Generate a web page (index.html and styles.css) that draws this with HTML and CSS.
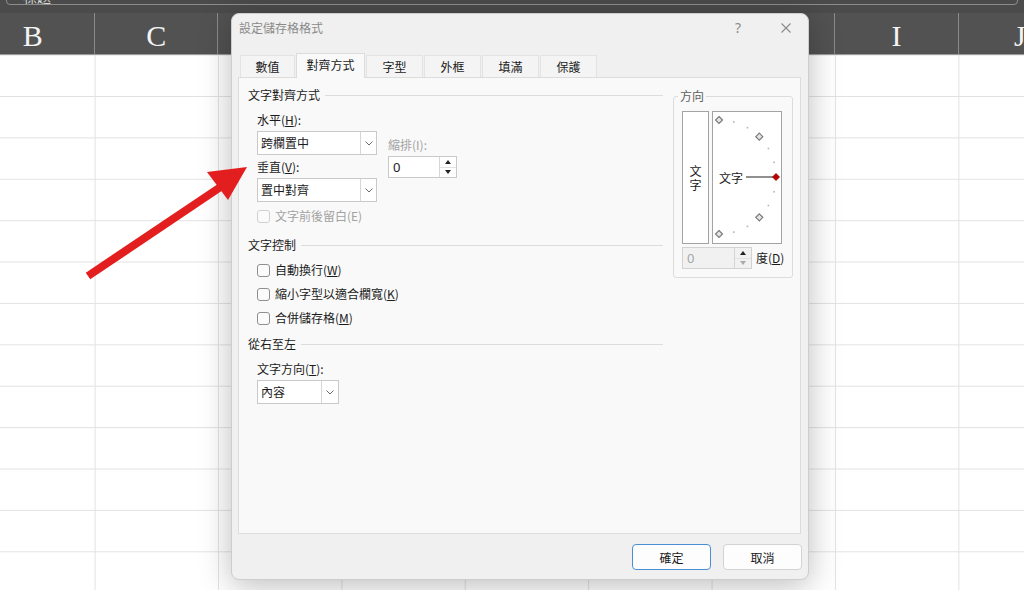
FILE: index.html
```html
<!DOCTYPE html>
<html lang="zh-Hant">
<head>
<meta charset="utf-8">
<title>設定儲存格格式</title>
<link rel="stylesheet" href="styles.css">
</head>
<body>
<div class="sheet">
  <div class="topbar"><div class="namebox">標題</div></div>
  <div class="colheader">
    <div class="col">B</div><div class="col">C</div><div class="col">D</div><div class="col">E</div><div class="col">F</div><div class="col">G</div><div class="col">H</div><div class="col">I</div><div class="col">J</div>
  </div>
  <div class="grid"></div>
</div>

<div class="dialog">
  <div class="titlebar">
    <span class="title">設定儲存格格式</span>
    <span class="help">?</span>
    <span class="close"><svg viewBox="0 0 10 10" width="10" height="10"><path d="M0.5 0.5L9.5 9.5M9.5 0.5L0.5 9.5" stroke="#8a8a8a" stroke-width="1.1" fill="none"/></svg></span>
  </div>
  <div class="tabs">
    <div class="tab first">數值</div>
    <div class="tab active">對齊方式</div>
    <div class="tab">字型</div>
    <div class="tab">外框</div>
    <div class="tab">填滿</div>
    <div class="tab">保護</div>
  </div>
  <div class="panel">
    <div class="leftcol">
      <div class="grouphead"><span>文字對齊方式</span><i class="rule"></i></div>
      <div class="indent">
        <div class="alignrow">
          <div class="subcol">
            <div class="label">水平(<u>H</u>):</div>
            <div class="select"><span class="val">跨欄置中</span><span class="drop"><svg viewBox="0 0 8 5" width="8" height="5"><path d="M0.5 0.5L4 4L7.5 0.5" stroke="#6a6a6a" fill="none" stroke-width="1"/></svg></span></div>
            <div class="label second">垂直(<u>V</u>):</div>
            <div class="select"><span class="val">置中對齊</span><span class="drop"><svg viewBox="0 0 8 5" width="8" height="5"><path d="M0.5 0.5L4 4L7.5 0.5" stroke="#6a6a6a" fill="none" stroke-width="1"/></svg></span></div>
          </div>
          <div class="indentcol">
            <div class="label dim">縮排(I):</div>
            <div class="spin"><span class="spinval">0</span><span class="spinbtns"><span class="up"></span><span class="down"></span></span></div>
          </div>
        </div>
        <div class="check disabled first-check"><span class="box"></span><span>文字前後留白(E)</span></div>
      </div>

      <div class="grouphead g2"><span>文字控制</span><i class="rule"></i></div>
      <div class="indent checks">
        <div class="check"><span class="box"></span><span>自動換行(<u>W</u>)</span></div>
        <div class="check"><span class="box"></span><span>縮小字型以適合欄寬(<u>K</u>)</span></div>
        <div class="check"><span class="box"></span><span>合併儲存格(<u>M</u>)</span></div>
      </div>

      <div class="grouphead g3"><span>從右至左</span><i class="rule"></i></div>
      <div class="indent">
        <div class="label third">文字方向(<u>T</u>):</div>
        <div class="select small"><span class="val">內容</span><span class="drop"><svg viewBox="0 0 8 5" width="8" height="5"><path d="M0.5 0.5L4 4L7.5 0.5" stroke="#6a6a6a" fill="none" stroke-width="1"/></svg></span></div>
      </div>
    </div>

    <fieldset class="orient">
      <legend>方向</legend>
      <div class="orientrow">
        <div class="vbox"><span>文</span><span>字</span></div>
        <div class="sbox">
          <svg viewBox="0 0 68 131" width="68" height="131">
            <g fill="#b4b4b4">
              <rect x="20" y="9.2" width="1.6" height="1.6"/>
              <rect x="33.7" y="14.9" width="1.6" height="1.6"/>
              <rect x="54.6" y="35.7" width="1.6" height="1.6"/>
              <rect x="60.3" y="49.5" width="1.6" height="1.6"/>
              <rect x="60.3" y="79" width="1.6" height="1.6"/>
              <rect x="54.6" y="92.7" width="1.6" height="1.6"/>
              <rect x="33.7" y="113.6" width="1.6" height="1.6"/>
              <rect x="20" y="119.3" width="1.6" height="1.6"/>
            </g>
            <g fill="#e6e6e6" stroke="#7a7a7a" stroke-width="1.2">
              <polygon points="6,4.5 9.5,8 6,11.5 2.5,8"/>
              <polygon points="46.3,21.2 49.8,24.7 46.3,28.2 42.8,24.7"/>
              <polygon points="46.3,101.8 49.8,105.3 46.3,108.8 42.8,105.3"/>
              <polygon points="6,118.5 9.5,122 6,125.5 2.5,122"/>
            </g>
            <text x="6" y="71" class="svgtext">文字</text>
            <line x1="33" y1="65" x2="60" y2="65" stroke="#222" stroke-width="1"/>
            <polygon points="63,61.5 66.5,65 63,68.5 59.5,65" fill="#c00000" stroke="#8a0000" stroke-width="0.8"/>
          </svg>
        </div>
      </div>
      <div class="degrow">
        <div class="spin disabled"><span class="spinval">0</span><span class="spinbtns"><span class="up"></span><span class="down"></span></span></div>
        <span class="deg">度(<u>D</u>)</span>
      </div>
    </fieldset>
  </div>
  <div class="footer">
    <button class="btn primary">確定</button>
    <button class="btn">取消</button>
  </div>
</div>

<svg class="arrow" viewBox="0 0 1024 590" width="1024" height="590">
  <line x1="88" y1="276" x2="222" y2="186" stroke="#e31e1e" stroke-width="8"/>
  <polygon points="247,167 207,172 228,200" fill="#e31e1e"/>
</svg>
</body>
</html>
```

FILE: styles.css
```css
* { box-sizing: border-box; }

body {
  margin: 0;
  width: 1024px;
  height: 590px;
  overflow: hidden;
  position: relative;
  background: #ffffff;
  font-family: "Noto Sans CJK TC", "Noto Sans", sans-serif;
  font-size: 12px;
  color: #1b1b1b;
}

u { text-decoration: underline; text-underline-offset: 1px; }

/* ---------- spreadsheet background ---------- */
.sheet {
  display: flex;
  flex-direction: column;
  height: 590px;
  overflow: hidden;
}

.topbar {
  height: 13px;
  background: #4b4b4b;
  overflow: hidden;
  padding: 0 6px;
}

.namebox {
  margin-top: -13px;
  height: 18px;
  border: 1px solid #8d8d8d;
  border-radius: 4px;
  color: #d8d8d8;
  font-size: 14px;
  line-height: 16px;
  padding-left: 16px;
}

.colheader {
  height: 42px;
  background: #525252;
  border-bottom: 1px solid #9a9a9a;
  display: flex;
  margin-left: -28.4px;
  overflow: hidden;
}

.col {
  flex: 0 0 123.4px;
  border-right: 1px solid #8a8a8a;
  color: #f4f4f4;
  font-family: "Liberation Serif", serif;
  font-size: 30px;
  display: flex;
  justify-content: center;
  align-items: center;
  padding-top: 4px;
}

.grid {
  flex: 1;
  background-color: #ffffff;
  background-image:
    linear-gradient(to right, #e2e2e2 1px, transparent 1px),
    linear-gradient(to bottom, #e2e2e2 1px, transparent 1px);
  background-size: 123.4px 100%, 100% 41.4px;
  background-position: 94.6px 0, 0 41px;
}

/* ---------- dialog ---------- */
.dialog {
  position: absolute;
  left: 231px;
  top: 13px;
  width: 578px;
  height: 567px;
  background: #f0f0f0;
  border: 1px solid #cdcdcd;
  border-radius: 8px;
  box-shadow: 0 6px 32px rgba(0, 0, 0, 0.26);
  display: flex;
  flex-direction: column;
  z-index: 5;
}

.titlebar {
  height: 28px;
  display: flex;
  align-items: center;
  padding-left: 7px;
  color: #8a8a8a;
  line-height: 16px;
}

.title { flex: 1; }

.help {
  font-family: "Noto Sans", sans-serif;
  font-size: 14px;
  width: 10px;
  text-align: center;
  margin-right: 38px;
}

.close {
  width: 10px;
  height: 10px;
  margin-right: 17px;
  display: flex;
}

.tabs {
  display: flex;
  gap: 1px;
  align-items: flex-end;
  height: 25px;
  margin-top: 11px;
  margin-bottom: -1px;
  padding-left: 8px;
  position: relative;
  z-index: 1;
}

.tab {
  width: 57px;
  height: 22px;
  margin-bottom: 1px;
  background: #f4f4f4;
  border: 1px solid #e3e3e3;
  border-bottom: none;
  display: flex;
  align-items: center;
  justify-content: center;
  line-height: 16px;
}

.tab.first { width: 55px; }

.tab.active {
  width: 69px;
  height: 25px;
  margin-bottom: 0;
  background: #f9f9f9;
  border-color: #dcdcdc;
  padding-bottom: 2px;
}

.panel {
  margin: 0 7px 0 6px;
  height: 457px;
  background: #f9f9f9;
  border: 1px solid #dcdcdc;
  display: flex;
  align-items: flex-start;
  padding: 9px 0 0 9px;
}

.leftcol { width: 415px; flex-shrink: 0; }

.grouphead {
  display: flex;
  align-items: center;
  height: 16px;
  line-height: 16px;
  gap: 5px;
}

.grouphead .rule {
  flex: 1;
  height: 1px;
  background: #dddddd;
}

.grouphead.g2 { margin-top: 9px; }
.grouphead.g3 { margin-top: 6px; }

.indent { padding-left: 9px; }

.alignrow {
  display: flex;
  margin-top: 9px;
}

.label {
  height: 16px;
  line-height: 16px;
}

.label.second { margin-top: 4px; }
.label.third { margin-top: 9px; }
.label.dim { color: #a2a2a2; }

.select {
  height: 24px;
  width: 120px;
  margin-top: 3px;
  background: #ffffff;
  border: 1px solid #c9c9c9;
  display: flex;
}

.select.small { width: 82px; }

.select .val {
  flex: 1;
  padding-left: 3px;
  line-height: 22px;
}

.select .drop {
  width: 16px;
  border-left: 1px solid #d6d6d6;
  display: flex;
  align-items: center;
  justify-content: center;
}

.select.small .drop { width: 17px; }

.indentcol {
  margin-left: 11px;
  padding-top: 25px;
}

.spin {
  margin-top: 3px;
  width: 69px;
  height: 22px;
  background: #ffffff;
  border: 1px solid #c9c9c9;
  display: flex;
  flex-shrink: 0;
}

.spinval {
  flex: 1;
  padding-left: 4px;
  line-height: 20px;
  font-family: "Noto Sans", sans-serif;
  font-size: 13px;
}

.spinbtns {
  width: 17px;
  border-left: 1px solid #d6d6d6;
  display: flex;
  flex-direction: column;
}

.spinbtns span {
  flex: 1;
  display: flex;
  align-items: center;
  justify-content: center;
}

.spinbtns .up { border-bottom: 1px solid #e2e2e2; }

.spinbtns .up::before {
  content: "";
  border-left: 3.5px solid transparent;
  border-right: 3.5px solid transparent;
  border-bottom: 4px solid #222;
}

.spinbtns .down::before {
  content: "";
  border-left: 3.5px solid transparent;
  border-right: 3.5px solid transparent;
  border-top: 4px solid #222;
}

.spin.disabled {
  margin-top: 0;
  width: 70px;
  background: #f1f1f1;
  border-color: #d2d2d2;
}

.spin.disabled .spinval { color: #a6a6a6; }
.spin.disabled .down::before { border-top-color: #aaaaaa; }

.check {
  display: flex;
  align-items: center;
  height: 24px;
  gap: 5px;
  line-height: 16px;
}

.check .box {
  width: 13px;
  height: 13px;
  border: 1px solid #8f8f8f;
  border-radius: 3px;
  background: #fbfbfb;
}

.check.disabled { color: #a2a2a2; }
.check.disabled .box { border-color: #d0d0d0; }
.first-check { margin-top: 2px; }

.checks { margin-top: 5px; }

/* ---------- orientation group ---------- */
.orient {
  margin: 1px 0 0 10px;
  width: 120px;
  flex-shrink: 0;
  border: 1px solid #dcdcdc;
  border-radius: 3px;
  padding: 7px 2px 8px 8px;
  min-width: 0;
}

.orient legend {
  padding: 0 2px;
  margin-left: -4px;
  line-height: 16px;
  color: #5e5e5e;
}

.orientrow {
  display: flex;
  gap: 3px;
}

.vbox {
  width: 27px;
  height: 133px;
  border: 1px solid #a3a3a3;
  background: #ffffff;
  display: flex;
  flex-direction: column;
  align-items: center;
  justify-content: center;
  line-height: 14px;
}

.sbox {
  width: 70px;
  height: 133px;
  border: 1px solid #a3a3a3;
  background: #ffffff;
  display: flex;
}

.svgtext {
  font-family: "Noto Sans CJK TC", sans-serif;
  font-size: 12px;
  fill: #1b1b1b;
}

.degrow {
  display: flex;
  align-items: center;
  margin-top: 3px;
  white-space: nowrap;
}

.deg {
  margin-left: 4px;
  line-height: 16px;
  flex-shrink: 0;
}

/* ---------- footer ---------- */
.footer {
  flex: 1;
  display: flex;
  justify-content: flex-end;
  align-items: flex-start;
  gap: 12px;
  padding: 10px 6px 0 0;
}

.btn {
  width: 79px;
  height: 26px;
  border: 1px solid #d3d3d3;
  border-radius: 4px;
  background: #fdfdfd;
  font: inherit;
  color: #1b1b1b;
  padding: 0;
}

.btn.primary {
  border-color: #4a8fd6;
}

/* ---------- annotation arrow ---------- */
.arrow {
  position: absolute;
  left: 0;
  top: 0;
  z-index: 10;
  pointer-events: none;
}
```
